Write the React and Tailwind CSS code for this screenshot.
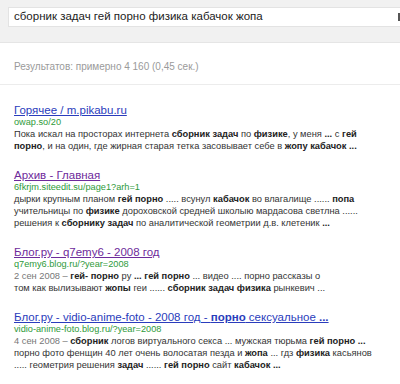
import React from "react";

const results = [
  {
    title: [["Горячее / m.pikabu.ru", false]],
    visited: false,
    url: "owap.so/20",
    lines: [
      "Пока искал на просторах интернета **сборник задач** по **физике**, у меня **...** с **гей**",
      "**порно**, и на один, где жирная старая тетка засовывает себе в **жопу кабачок ...**",
    ],
  },
  {
    title: [["Архив - Главная", false]],
    visited: true,
    url: "6fkrjm.siteedit.su/page1?arh=1",
    lines: [
      "дырки крупным планом **гей порно** ..... всунул **кабачок** во влагалище ...... **попа**",
      "учительницы по **физике** дороховской средней школыю мардасова светлна ......",
      "решения к **сборнику задач** по аналитической геометрии д.в. клетеник **...**",
    ],
  },
  {
    title: [["Блог.ру - q7emy6 - 2008 год", false]],
    visited: true,
    url: "q7emy6.blog.ru/?year=2008",
    date: "2 сен 2008 – ",
    lines: [
      "**гей- порно** ру **...** **гей порно** ... видео .... порно рассказы о",
      "том как вылизывают **жопы** геи ...... **сборник задач физика** рынкевич ...",
    ],
  },
  {
    title: [
      ["Блог.ру - vidio-anime-foto - 2008 год - ", false],
      ["порно", true],
      [" сексуальное ", false],
      ["...", true],
    ],
    visited: false,
    url: "vidio-anime-foto.blog.ru/?year=2008",
    date: "4 сен 2008 – ",
    lines: [
      "**сборник** логов виртуального секса ... мужская тюрьма **гей порно ...**",
      "порно фото фенщин 40 лет очень волосатая пезда и **жопа** ... гдз **физика** касьянов",
      "..... геометрия решения **задач** ...... **гей порно** сайт **кабачок ...**",
    ],
  },
];

// splits "**bold**" markup into spans
const Rich = ({ text }) =>
  text.split("**").map((part, i) =>
    i % 2 === 1 ? (
      <b key={i} className="font-bold text-[#222]">
        {part}
      </b>
    ) : (
      <span key={i}>{part}</span>
    )
  );

const App = () => {
  return (
    <div className="w-[400px] h-[384px] overflow-hidden bg-white font-['Liberation_Sans',Arial,sans-serif]">
      {/* HEADER */}
      <div className="h-[43px] bg-[#f1f1f1] border-b border-[#e5e5e5] pt-[7px] pl-[8px]">
        <div className="relative h-[20px] bg-white border border-[#e3e3e3] border-r-0 flex items-center pl-[5px]">
          <span className="text-[11.5px] leading-none text-[#222] whitespace-nowrap">
            сборник задач гей порно физика кабачок жопа
          </span>
          <span className="absolute right-0 top-[5px] w-[2px] h-[8px] bg-[#555]" />
        </div>
      </div>

      {/* STATS */}
      <div className="h-[42px] flex items-center pl-[14px] pt-[5px] border-b border-[#ececec]">
        <span className="text-[10px] text-[#9a9a9a] whitespace-nowrap">
          Результатов: примерно 4 160 (0,45 сек.)
        </span>
      </div>

      {/* RESULTS */}
      <div className="pl-[14px] pt-[19px] flex flex-col gap-[17px]">
        {results.map((r, idx) => (
          <div key={idx} className="flex flex-col">
            <div
              className={`text-[11.5px] leading-[13px] underline whitespace-nowrap ${
                r.visited ? "text-[#6e2a9b]" : "text-[#2a3cbc]"
              }`}
            >
              {r.title.map(([t, bold], i) =>
                bold ? (
                  <b key={i} className="font-bold">
                    {t}
                  </b>
                ) : (
                  <span key={i}>{t}</span>
                )
              )}
            </div>
            <div className="text-[9.2px] leading-[11px] text-[#2e9a3a] whitespace-nowrap">
              {r.url}
            </div>
            <div className="text-[9.3px] leading-[12px] text-[#333] whitespace-nowrap">
              {r.lines.map((line, i) => (
                <div key={i}>
                  {i === 0 && r.date && (
                    <span className="text-[#777]">{r.date}</span>
                  )}
                  <Rich text={line} />
                </div>
              ))}
            </div>
          </div>
        ))}
      </div>
    </div>
  );
};

export default App;
